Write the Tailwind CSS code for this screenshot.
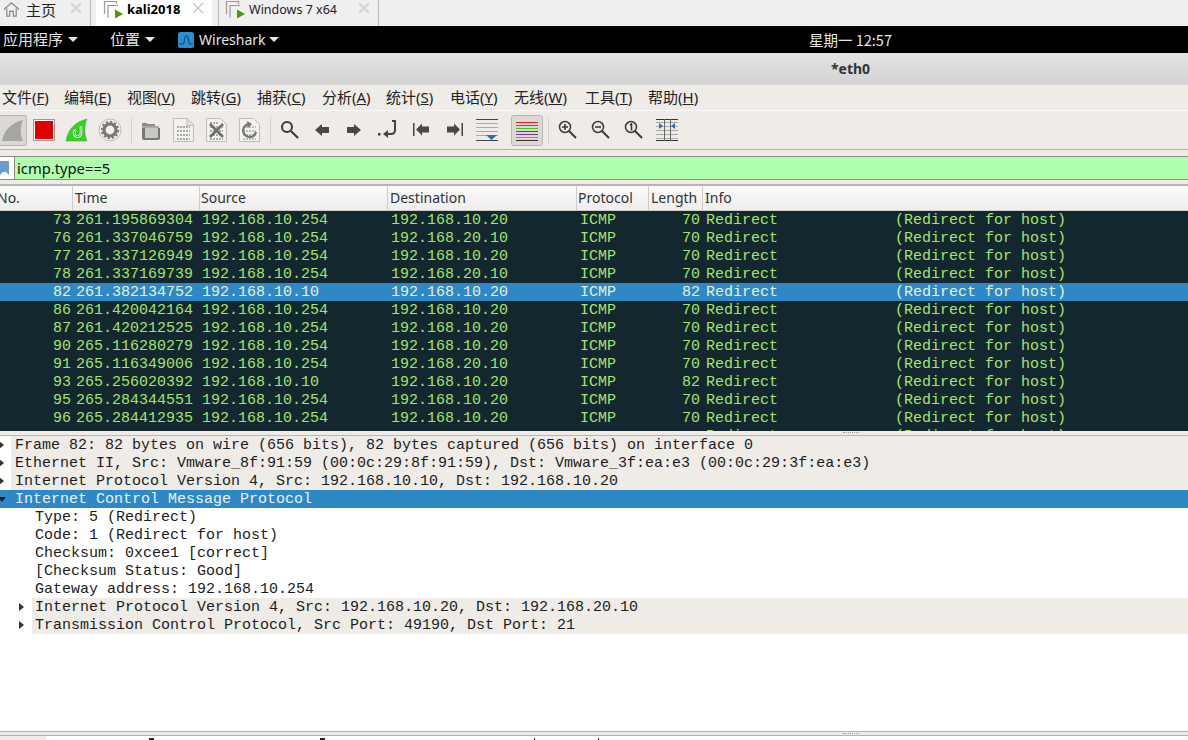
<!DOCTYPE html>
<html><head><meta charset="utf-8"><script src="https://cdn.jsdelivr.net/npm/@tailwindcss/browser@4"></script></head>
<body class="m-0 overflow-hidden bg-white">
<div class="w-[1188px] h-[740px] overflow-hidden flex flex-col font-['Noto_Sans','Noto_Sans_CJK_SC',sans-serif] text-[14px] text-[#2e3436]">
  <!-- VM tabs -->
  <div class="h-[26px] flex bg-[#efefef] shrink-0 text-[13px] text-[#222]">
    <div class="w-[91px] border-r border-[#bbb] flex items-center pb-[8px] relative">
      <svg class="ml-[3px]" width="17" height="17" viewBox="0 0 18 18" fill="none" stroke="#888" stroke-width="1.3"><path d="M1 9 9 2l8 7M4 8v8h3v-5h4v5h3V8"/></svg>
      <span class="ml-[6px] text-[15px] leading-none font-['Noto_Sans_CJK_SC',sans-serif]">主页</span>
      <svg class="absolute left-[70px] top-[2px]" width="12" height="12" viewBox="0 0 12 12" stroke="#ccc" stroke-width="1.6"><path d="M1 1l10 10M11 1 1 11"/></svg>
    </div>
    <div class="ml-[5px] w-[116px] bg-white flex items-center pb-[6px] relative">
      <svg class="ml-[7px]" width="20" height="20" viewBox="0 0 20 20" fill="none"><path d="M1.500 14V1.500h12V4M5 17.500V5.500h10" stroke="#999" stroke-width="1.200"/><path d="M12 9.500v9l8-4.500z" fill="#4e9a06"/></svg>
      <span class="ml-[4px] font-bold text-black text-[13px]">kali2018</span>
      <svg class="absolute left-[96px] top-[2px]" width="12" height="12" viewBox="0 0 12 12" stroke="#ccc" stroke-width="1.6"><path d="M1 1l10 10M11 1 1 11"/></svg>
    </div>
    <div class="ml-[6px] w-[161px] border-x border-[#bbb] flex items-center pb-[6px] relative">
      <svg class="ml-[6px]" width="20" height="20" viewBox="0 0 20 20" fill="none"><path d="M1.500 14V1.500h12V4M5 17.500V5.500h10" stroke="#999" stroke-width="1.200"/><path d="M12 9.500v9l8-4.500z" fill="#4e9a06"/></svg>
      <span class="ml-[4px] text-[12.500px] text-[#222]">Windows 7 x64</span>
      <svg class="absolute left-[139px] top-[2px]" width="12" height="12" viewBox="0 0 12 12" stroke="#ccc" stroke-width="1.6"><path d="M1 1l10 10M11 1 1 11"/></svg>
    </div>
  </div>
  <!-- GNOME top bar -->
  <div class="h-[27px] bg-black text-[#e6e6e6] flex items-center shrink-0 relative font-['Noto_Sans_CJK_SC',sans-serif] text-[15px]">
    <span class="ml-[3px]">应用程序</span><i class="ml-[5px] w-0 h-0 border-x-[5px] border-x-transparent border-t-[5px] border-t-[#e6e6e6]"></i>
    <span class="ml-[32px]">位置</span><i class="ml-[5px] w-0 h-0 border-x-[5px] border-x-transparent border-t-[5px] border-t-[#e6e6e6]"></i>
    <svg class="ml-[23px]" width="16" height="16" viewBox="0 0 16 16"><rect width="16" height="16" rx="2.500" fill="#2a8fd0"/><path d="M1 12h4c2 0 1-8 3-8h1c2 0 1 8 3 8h3" fill="none" stroke="#0b4a78" stroke-width="1.200"/></svg>
    <span class="ml-[5px] font-['Noto_Sans',sans-serif] text-[14px]">Wireshark</span><i class="ml-[3px] w-0 h-0 border-x-[5px] border-x-transparent border-t-[5px] border-t-[#e6e6e6]"></i>
    <span class="absolute left-[809px] text-[14.500px]">星期一 12:57</span>
  </div>
  <!-- title -->
  <div class="h-[32px] shrink-0 bg-gradient-to-b from-[#e4e4e4] to-[#d2d2d2] flex items-center font-bold text-[14px] text-[#2e3436] pl-[831px] pb-[2px]">*eth0</div>
  <!-- menu -->
  <div class="h-[25px] shrink-0 bg-[#efebe7] flex items-center text-[15px] text-[#222] font-['Noto_Sans','Noto_Sans_CJK_SC',sans-serif]">
    <span class="ml-[2px] w-[62px]">文件(<u>F</u>)</span><span class="w-[63px]">编辑(<u>E</u>)</span><span class="w-[64px]">视图(<u>V</u>)</span><span class="w-[66px]">跳转(<u>G</u>)</span><span class="w-[65px]">捕获(<u>C</u>)</span><span class="w-[64px]">分析(<u>A</u>)</span><span class="w-[64px]">统计(<u>S</u>)</span><span class="w-[64px]">电话(<u>Y</u>)</span><span class="w-[71px]">无线(<u>W</u>)</span><span class="w-[63px]">工具(<u>T</u>)</span><span>帮助(<u>H</u>)</span>
  </div>
  <!-- toolbar -->
  <div class="h-[40px] shrink-0 bg-[#efebe7] border-t border-[#fbfaf9] border-b border-b-[#b5b1ad] flex items-center">
    <div class="self-start mt-[4px] w-[27px] h-[31px] rounded-r-[3px] bg-[#dcd8d3] border border-l-0 border-[#b8b4af] flex items-center justify-center"><svg width="24" height="26" viewBox="0 0 24 26"><path d="M1 23C3 12 10 5 22 2c-3 7-3 14 0 21z" fill="#a7a7a2"/></svg></div>
    <div class="ml-[6px] w-[22px] h-[22px] border border-[#999] bg-white p-[1px]"><div class="w-full h-full bg-[#e00000]"></div></div>
    <svg class="ml-[10px]" width="24" height="26" viewBox="0 0 24 26"><path d="M1 24C3 12 10 5 22 2c-3 7-3 15 0 22z" fill="#2fd61a" stroke="#777" stroke-width=".5"/><path d="M16 9v7a3.500 3.500 0 1 1-5-3" fill="none" stroke="#fff" stroke-width="2.400"/><path d="M16 9v7a3.500 3.500 0 1 1-5-3" fill="none" stroke="#174" stroke-width=".7"/></svg>
    <svg class="ml-[9px]" width="24" height="24" viewBox="0 0 24 24"><circle cx="12" cy="12" r="11" fill="#f4f2f0" stroke="#bbb"/><circle cx="12" cy="12" r="6" fill="none" stroke="#777" stroke-width="3.200"/><circle cx="12" cy="12" r="8.300" fill="none" stroke="#777" stroke-width="1.800" stroke-dasharray="2.500 1.800"/></svg>
    <i class="ml-[9px] w-px h-[27px] bg-[#d5d1cc]"></i>
    <svg class="ml-[9px]" width="20" height="20" viewBox="0 0 20 20"><path d="M1 3h5v1h8v3H1z" fill="#8a8a86"/><path d="M1 6h17v3H1z" fill="#aaa"/><path d="M1 8h3v10h13V8h2v10a2 2 0 0 1-2 2H3a2 2 0 0 1-2-2z" fill="#777"/><rect x="4" y="8" width="13" height="10" fill="#c8c8c4"/></svg>
    <svg class="ml-[12px]" width="21" height="24" viewBox="0 0 21 24"><path d="M.5.500h14l6 6v17H.5z" fill="#f4f2ef" stroke="#c0bdb8"/><path d="M14 .5v7h6.500" fill="#ddd" stroke="#c0bdb8"/><g stroke="#aaa" stroke-width="2" stroke-dasharray="2 1"><path d="M4 9h13M4 13h13M4 17h13M4 21h13"/></g></svg>
    <svg class="ml-[12px]" width="21" height="24" viewBox="0 0 21 24"><path d="M.5.500h14l6 6v17H.5z" fill="#f4f2ef" stroke="#c0bdb8"/><g stroke="#aaa" stroke-width="2" stroke-dasharray="2 1"><path d="M4 5h9M4 9h13M4 13h13M4 17h13M4 21h13"/></g><path d="M4 6l13 13M17 6 4 19" stroke="#6f6f6b" stroke-width="2.600"/></svg>
    <svg class="ml-[12px]" width="21" height="24" viewBox="0 0 21 24"><path d="M.5.500h14l6 6v17H.5z" fill="#f4f2ef" stroke="#c0bdb8"/><g stroke="#bbb" stroke-width="2" stroke-dasharray="2 1"><path d="M4 9h13M4 13h13M4 17h13M4 21h13"/></g><path d="M11 6a6.500 6.500 0 1 0 6 8" fill="none" stroke="#777" stroke-width="2.400"/><path d="M8 3l5 3-4 4z" fill="#777"/></svg>
    <i class="ml-[10px] w-px h-[27px] bg-[#d5d1cc]"></i>
    <svg class="ml-[9px]" width="19" height="20" viewBox="0 0 19 20" fill="none" stroke="#3a3a3a"><circle cx="7" cy="7" r="5" stroke-width="2"/><path d="M11 11l7 7" stroke-width="2.200"/></svg>
    <svg class="ml-[16px]" width="14" height="12" viewBox="0 0 14 12"><path d="M0 6l7-6v3h7v6H7v3z" fill="#484848"/></svg>
    <svg class="ml-[18px]" width="14" height="12" viewBox="0 0 14 12"><path d="M14 6 7 0v3H0v6h7v3z" fill="#484848"/></svg>
    <svg class="ml-[17px]" width="20" height="20" viewBox="0 0 20 20" fill="none"><rect x="0" y="13" width="2.500" height="2.500" fill="#444"/><path d="M14 1h3v9c0 3-2 4-4 4H9" stroke="#444" stroke-width="2"/><path d="M5 14l5-4v8z" fill="#444"/></svg>
    <svg class="ml-[15px]" width="16" height="14" viewBox="0 0 16 14"><rect width="1.500" height="13" fill="#444"/><path d="M3 6.500l6-6v3h7v6H9v3z" fill="#484848"/></svg>
    <svg class="ml-[18px]" width="16" height="14" viewBox="0 0 16 14"><rect x="14.500" width="1.500" height="13" fill="#444"/><path d="M13 6.500l-6-6v3H0v6h7v3z" fill="#484848"/></svg>
    <svg class="ml-[13px]" width="22" height="22" viewBox="0 0 22 22"><g stroke="#aaa"><path d="M0 4.500h22M0 8.500h22M0 12.500h22M0 16.500h22"/></g><path d="M0 .5h22M0 21.500h22" stroke="#444"/><path d="M10 16h11l-5.500 5z" fill="#2f6cb0"/></svg>
    <div class="self-start mt-[4px] ml-[13px] w-[32px] h-[31px] pt-[2px] rounded-[3px] bg-[#dcd8d3] border border-[#b8b4af] flex items-center justify-center"><svg width="22" height="19" viewBox="0 0 22 19"><rect y="0" width="22" height="1" fill="#e02020"/><rect y="3" width="22" height="1" fill="#3070d0"/><rect y="6" width="22" height="1" fill="#50c010"/><rect y="9" width="22" height="1" fill="#2f4cb0"/><rect y="12" width="22" height="1" fill="#803090"/><rect y="15" width="22" height="1" fill="#c09010"/><rect y="18" width="22" height="1" fill="#333"/></svg></div>
    <i class="ml-[5px] w-px h-[27px] bg-[#d5d1cc]"></i>
    <svg class="ml-[9px]" width="19" height="20" viewBox="0 0 19 20" fill="none" stroke="#3a3a3a"><circle cx="7" cy="7" r="5.500" stroke-width="1.500"/><path d="M11 11l7 7" stroke-width="2"/><path d="M4 7h6M7 4v6" stroke-width="1.600"/></svg>
    <svg class="ml-[14px]" width="19" height="20" viewBox="0 0 19 20" fill="none" stroke="#3a3a3a"><circle cx="7" cy="7" r="5.500" stroke-width="1.500"/><path d="M11 11l7 7" stroke-width="2"/><path d="M4 7h6" stroke-width="1.600"/></svg>
    <svg class="ml-[14px]" width="19" height="20" viewBox="0 0 19 20" fill="none" stroke="#3a3a3a"><circle cx="7" cy="7" r="5.500" stroke-width="1.500"/><path d="M11 11l7 7" stroke-width="2"/><path d="M6 5l1.500-1v6.500" stroke-width="1.600"/></svg>
    <svg class="ml-[13px]" width="22" height="22" viewBox="0 0 22 22"><g stroke="#aaa"><path d="M0 3.500h22M0 7.500h22M0 11.500h22M0 15.500h22M0 19.500h22"/></g><path d="M0 .5h22M0 21.500h22" stroke="#333"/><path d="M8.500 0v22M14.500 0v22" stroke="#666"/><path d="M3 4v6l4-3zM19 4v6l-4-3z" fill="#2f6cb0"/></svg>
  </div>
  <!-- filter -->
  <div class="h-[36px] shrink-0 bg-[#efebe7] border-b-[2px] border-b-[#bab6b1] pt-[6px]">
    <div class="h-[24px] border-y border-[#8d8a86] flex items-center bg-[#afffaf]">
      <div class="w-[15px] h-full bg-white border-r border-[#8d8a86] flex items-center"><svg width="9" height="14" viewBox="0 0 9 14"><path d="M0 0h9v14l-3-3H3l-3 3z" fill="#6b9bd0"/></svg></div>
      <span class="ml-[2px] text-[14.750px] text-[#111]">icmp.type==5</span>
    </div>
  </div>
  <!-- header -->
  <div class="h-[25px] shrink-0 flex text-[14px] text-[#2e3436] bg-gradient-to-b from-[#fbfafa] to-[#f0eeec] border-b border-[#d0ccc8] items-center">
    <div class="w-[73px] h-full border-r border-[#cfcbc6] pl-0 pb-[2px] -indent-[3px] flex items-center">No.</div>
    <div class="w-[127px] h-full border-r border-[#cfcbc6] pl-[2px] pb-[2px] flex items-center">Time</div>
    <div class="w-[188px] h-full border-r border-[#cfcbc6] pl-[1px] pb-[2px] flex items-center">Source</div>
    <div class="w-[189px] h-full border-r border-[#cfcbc6] pl-[2px] pb-[2px] flex items-center">Destination</div>
    <div class="w-[72px] h-full border-r border-[#cfcbc6] pl-[1px] pb-[2px] flex items-center">Protocol</div>
    <div class="w-[54px] h-full border-r border-[#cfcbc6] pl-[2px] pb-[2px] flex items-center">Length</div>
    <div class="pl-[2px] pb-[2px] h-full flex items-center">Info</div>
  </div>
  <!-- packets -->
  <div class="h-[220px] shrink-0 overflow-hidden bg-[#12272e] text-[#a4e46e] font-['Liberation_Mono',monospace] text-[15px] leading-[20px]">
    <div class="h-[18px] flex"><span class="w-[71px] text-right">73</span><span class="ml-[5px] w-[126px]">261.195869304</span><span class="w-[189px]">192.168.10.254</span><span class="w-[189px]">192.168.10.20</span><span class="w-[72px]">ICMP</span><span class="w-[48px] text-right">70</span><span class="ml-[6px] whitespace-pre">Redirect             (Redirect for host)</span></div>
    <div class="h-[18px] flex"><span class="w-[71px] text-right">76</span><span class="ml-[5px] w-[126px]">261.337046759</span><span class="w-[189px]">192.168.10.254</span><span class="w-[189px]">192.168.20.10</span><span class="w-[72px]">ICMP</span><span class="w-[48px] text-right">70</span><span class="ml-[6px] whitespace-pre">Redirect             (Redirect for host)</span></div>
    <div class="h-[18px] flex"><span class="w-[71px] text-right">77</span><span class="ml-[5px] w-[126px]">261.337126949</span><span class="w-[189px]">192.168.10.254</span><span class="w-[189px]">192.168.10.20</span><span class="w-[72px]">ICMP</span><span class="w-[48px] text-right">70</span><span class="ml-[6px] whitespace-pre">Redirect             (Redirect for host)</span></div>
    <div class="h-[18px] flex"><span class="w-[71px] text-right">78</span><span class="ml-[5px] w-[126px]">261.337169739</span><span class="w-[189px]">192.168.10.254</span><span class="w-[189px]">192.168.20.10</span><span class="w-[72px]">ICMP</span><span class="w-[48px] text-right">70</span><span class="ml-[6px] whitespace-pre">Redirect             (Redirect for host)</span></div>
    <div class="h-[18px] flex bg-[#2e88c6] text-[#e4f2d0]"><span class="w-[71px] text-right">82</span><span class="ml-[5px] w-[126px]">261.382134752</span><span class="w-[189px]">192.168.10.10</span><span class="w-[189px]">192.168.10.20</span><span class="w-[72px]">ICMP</span><span class="w-[48px] text-right">82</span><span class="ml-[6px] whitespace-pre">Redirect             (Redirect for host)</span></div>
    <div class="h-[18px] flex"><span class="w-[71px] text-right">86</span><span class="ml-[5px] w-[126px]">261.420042164</span><span class="w-[189px]">192.168.10.254</span><span class="w-[189px]">192.168.10.20</span><span class="w-[72px]">ICMP</span><span class="w-[48px] text-right">70</span><span class="ml-[6px] whitespace-pre">Redirect             (Redirect for host)</span></div>
    <div class="h-[18px] flex"><span class="w-[71px] text-right">87</span><span class="ml-[5px] w-[126px]">261.420212525</span><span class="w-[189px]">192.168.10.254</span><span class="w-[189px]">192.168.10.20</span><span class="w-[72px]">ICMP</span><span class="w-[48px] text-right">70</span><span class="ml-[6px] whitespace-pre">Redirect             (Redirect for host)</span></div>
    <div class="h-[18px] flex"><span class="w-[71px] text-right">90</span><span class="ml-[5px] w-[126px]">265.116280279</span><span class="w-[189px]">192.168.10.254</span><span class="w-[189px]">192.168.10.20</span><span class="w-[72px]">ICMP</span><span class="w-[48px] text-right">70</span><span class="ml-[6px] whitespace-pre">Redirect             (Redirect for host)</span></div>
    <div class="h-[18px] flex"><span class="w-[71px] text-right">91</span><span class="ml-[5px] w-[126px]">265.116349006</span><span class="w-[189px]">192.168.10.254</span><span class="w-[189px]">192.168.20.10</span><span class="w-[72px]">ICMP</span><span class="w-[48px] text-right">70</span><span class="ml-[6px] whitespace-pre">Redirect             (Redirect for host)</span></div>
    <div class="h-[18px] flex"><span class="w-[71px] text-right">93</span><span class="ml-[5px] w-[126px]">265.256020392</span><span class="w-[189px]">192.168.10.10</span><span class="w-[189px]">192.168.10.20</span><span class="w-[72px]">ICMP</span><span class="w-[48px] text-right">82</span><span class="ml-[6px] whitespace-pre">Redirect             (Redirect for host)</span></div>
    <div class="h-[18px] flex"><span class="w-[71px] text-right">95</span><span class="ml-[5px] w-[126px]">265.284344551</span><span class="w-[189px]">192.168.10.254</span><span class="w-[189px]">192.168.10.20</span><span class="w-[72px]">ICMP</span><span class="w-[48px] text-right">70</span><span class="ml-[6px] whitespace-pre">Redirect             (Redirect for host)</span></div>
    <div class="h-[18px] flex"><span class="w-[71px] text-right">96</span><span class="ml-[5px] w-[126px]">265.284412935</span><span class="w-[189px]">192.168.10.254</span><span class="w-[189px]">192.168.10.20</span><span class="w-[72px]">ICMP</span><span class="w-[48px] text-right">70</span><span class="ml-[6px] whitespace-pre">Redirect             (Redirect for host)</span></div>
    <div class="h-[18px] flex pl-[706px] whitespace-pre">Redirect             (Redirect for host)</div>
  </div>
  <!-- splitter -->
  <div class="h-[5px] shrink-0 bg-[#efebe7] border-b border-[#bab6b1] pl-[843px]"><div class="mt-[1px] w-[16px] h-[1px] border-t border-dotted border-[#999]"></div></div>
  <!-- details -->
  <div class="flex-1 min-h-0 bg-white font-['Liberation_Mono',monospace] text-[15px] leading-[20px] text-[#1c1c1c]">
    <div class="h-[18px] flex"><i class="self-center -ml-[1px] w-0 h-0 border-y-[4px] border-y-transparent border-l-[5px] border-l-[#333]"></i><span class="ml-[7px] pl-[4px] flex-1 bg-[#efebe7]">Frame 82: 82 bytes on wire (656 bits), 82 bytes captured (656 bits) on interface 0</span></div>
    <div class="h-[18px] flex"><i class="self-center -ml-[1px] w-0 h-0 border-y-[4px] border-y-transparent border-l-[5px] border-l-[#333]"></i><span class="ml-[7px] pl-[4px] flex-1 bg-[#efebe7]">Ethernet II, Src: Vmware_8f:91:59 (00:0c:29:8f:91:59), Dst: Vmware_3f:ea:e3 (00:0c:29:3f:ea:e3)</span></div>
    <div class="h-[18px] flex"><i class="self-center -ml-[1px] w-0 h-0 border-y-[4px] border-y-transparent border-l-[5px] border-l-[#333]"></i><span class="ml-[7px] pl-[4px] flex-1 bg-[#efebe7]">Internet Protocol Version 4, Src: 192.168.10.10, Dst: 192.168.10.20</span></div>
    <div class="h-[18px] flex bg-[#2e88c6] text-[#e8f2fa]"><i class="self-center -ml-[2px] w-0 h-0 border-x-[4px] border-x-transparent border-t-[5px] border-t-[#222]"></i><span class="ml-[9px]">Internet Control Message Protocol</span></div>
    <div class="h-[18px] pl-[35px]">Type: 5 (Redirect)</div>
    <div class="h-[18px] pl-[35px]">Code: 1 (Redirect for host)</div>
    <div class="h-[18px] pl-[35px]">Checksum: 0xcee1 [correct]</div>
    <div class="h-[18px] pl-[35px]">[Checksum Status: Good]</div>
    <div class="h-[18px] pl-[35px]">Gateway address: 192.168.10.254</div>
    <div class="h-[18px] flex"><i class="self-center ml-[19px] w-0 h-0 border-y-[4px] border-y-transparent border-l-[5px] border-l-[#333]"></i><span class="ml-[8px] pl-[3px] flex-1 bg-[#efebe7]">Internet Protocol Version 4, Src: 192.168.10.20, Dst: 192.168.20.10</span></div>
    <div class="h-[18px] flex"><i class="self-center ml-[19px] w-0 h-0 border-y-[4px] border-y-transparent border-l-[5px] border-l-[#333]"></i><span class="ml-[8px] pl-[3px] flex-1 bg-[#efebe7]">Transmission Control Protocol, Src Port: 49190, Dst Port: 21</span></div>
  </div>
  <!-- bottom -->
  <div class="h-[5px] shrink-0 bg-[#efebe7] border-y border-[#b5b1ad] pl-[843px]"><div class="mt-px w-[16px] h-px border-t border-dotted border-[#999]"></div></div>
  <div class="h-[4px] shrink-0 flex bg-white relative"><div class="w-[46px] bg-[#efebe7]"></div><i class="absolute left-[149px] top-[2px] w-[5px] h-[2px] bg-[#222]"></i><i class="absolute left-[320px] top-[2px] w-[5px] h-[2px] bg-[#222]"></i><i class="absolute left-[534px] top-[2px] w-[1px] h-[2px] bg-[#222]"></i><i class="absolute left-[598px] top-[2px] w-[1px] h-[2px] bg-[#222]"></i></div>
</div>
</body></html>
